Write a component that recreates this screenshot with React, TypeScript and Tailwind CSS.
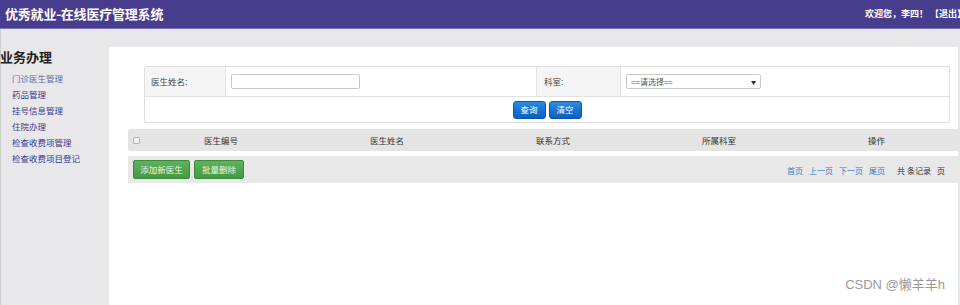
const menu = ['门诊医生管理', '药品管理', '挂号信息管理', '住院办理', '检查收费项管理', '检查收费项目登记'];
const cols = ['医生编号', '医生姓名', '联系方式', '所属科室', '操作'];
const pages = ['首页', '上一页', '下一页', '尾页'];

export default function App() {
  return (
    <div className="w-[960px] h-[305px] overflow-hidden bg-[#e8e8ea] font-['Noto_Sans_CJK_SC','Noto_Sans',sans-serif] text-[#333]">
      <div className="h-[29px] bg-[#473d8c] border-b border-[#7b72bb] flex items-center justify-between pl-[5px] overflow-hidden">
        <h1 className="text-[13px] font-bold text-white tracking-[-0.2px]">优秀就业-在线医疗管理系统</h1>
        <div className="text-[9px] font-bold text-white whitespace-nowrap -mr-[6px]">欢迎您，李四！ 【退出】</div>
      </div>

      <div className="flex h-[276px]">
        <aside className="w-[109px] shrink-0 border-l border-[#cfcfcf] pt-[20px]">
          <div className="text-[13px] font-bold text-[#222] leading-[16px] -ml-[1px]">业务办理</div>
          <ul className="mt-[5px] pl-[11px]">
            {menu.map((m, i) => (
              <li key={m} className={`text-[8.5px] leading-[16px] ${i === 0 ? 'text-[#6a67a8]' : 'text-[#3b3790]'}`}>
                {m}
              </li>
            ))}
          </ul>
        </aside>

        <main className="flex-1 min-w-0 mt-[18px] bg-white border-r-2 border-[#e8e8ea] pt-[19px]">
          <div className="ml-[35px] w-[806px] border border-[#dedede] rounded-[2px] text-[8.5px]">
            <div className="flex h-[30px] border-b border-[#e2e2e2]">
              <div className="w-[81px] bg-[#f5f5f5] border-r border-[#e2e2e2] flex items-center pl-[6px] text-[#444]">医生姓名:</div>
              <div className="w-[311px] border-r border-[#e2e2e2] flex items-center pl-[5px]">
                <div className="w-[129px] h-[15px] border border-[#c9c9c9] rounded-[2px] bg-white" />
              </div>
              <div className="w-[84px] bg-[#f5f5f5] border-r border-[#e2e2e2] flex items-center pl-[7px] text-[#444]">科室:</div>
              <div className="flex-1 flex items-center pl-[5px]">
                <div className="w-[135px] h-[15px] border border-[#c9c9c9] rounded-[2px] bg-white flex items-center justify-between px-[4px] text-[8px] text-[#555]">
                  <span>==请选择==</span>
                  <span className="text-[5px] text-[#222]">▼</span>
                </div>
              </div>
            </div>
            <div className="h-[25px] flex items-center justify-center gap-[3px]">
              <button className="w-[33px] h-[18px] rounded-[3px] border border-[#0b55a8] bg-gradient-to-b from-[#2b8be2] to-[#0d5ec0] text-white text-[8.5px]">查询</button>
              <button className="w-[33px] h-[18px] rounded-[3px] border border-[#0b55a8] bg-gradient-to-b from-[#2b8be2] to-[#0d5ec0] text-white text-[8.5px]">清空</button>
            </div>
          </div>

          <div className="ml-[19px] -mr-[2px] mt-[6px] h-[22px] bg-[#e4e4e4] rounded-[2px] flex items-center overflow-hidden text-[8.5px] text-[#333]">
            <div className="w-[76px] shrink-0 pl-[5px] flex items-center">
              <span className="w-[7px] h-[7px] border border-[#b5b5b5] rounded-[1px] bg-[#f2f2f2]" />
            </div>
            {cols.map((c) => (
              <div key={c} className="w-[166px] shrink-0">{c}</div>
            ))}
          </div>

          <div className="ml-[19px] -mr-[2px] mt-[5px] h-[27px] bg-[#e8e8e8] flex items-center justify-between pl-[5px] pr-[15px]">
            <div className="flex gap-[4px]">
              <button className="w-[57px] h-[19px] rounded-[2px] border border-[#3d8a3d] bg-gradient-to-b from-[#5cb35c] to-[#449a44] text-[#e8f5e8] text-[8.5px]">添加新医生</button>
              <button className="w-[50px] h-[19px] rounded-[2px] border border-[#3d8a3d] bg-gradient-to-b from-[#5cb35c] to-[#449a44] text-[#e8f5e8] text-[8.5px]">批量删除</button>
            </div>
            <div className="flex items-center gap-[6px] mt-[2px] whitespace-nowrap text-[8px]">
              {pages.map((p) => (
                <span key={p} className="text-[#2f7fc8]">{p}</span>
              ))}
              <span className="ml-[6px] text-[#333]">共</span>
              <span className="-ml-[4px] text-[#333]">条记录</span>
              <span className="text-[#333]">页</span>
            </div>
          </div>

          <div className="mt-[94px] pr-[13px] text-right whitespace-nowrap text-[13px] leading-[16px] text-[#999] font-['Liberation_Sans','Noto_Sans_CJK_SC',sans-serif]">CSDN @懒羊羊h</div>
        </main>
      </div>
    </div>
  );
}
